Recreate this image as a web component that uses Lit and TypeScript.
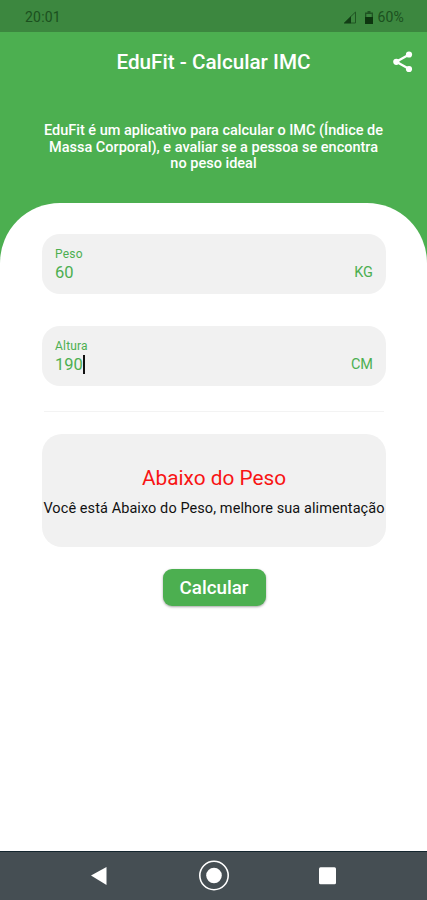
import { LitElement, html, css } from "lit";
import { customElement, property } from "lit/decorators.js";

@customElement("measure-field")
class MeasureField extends LitElement {
  @property() label = "";
  @property() value = "";
  @property() unit = "";
  @property({ type: Boolean }) active = false;

  static styles = css`
    :host {
      display: flex;
      justify-content: space-between;
      align-items: flex-end;
      box-sizing: border-box;
      height: 60px;
      padding: 0 13px 11px;
      border-radius: 18px;
      background: #f1f1f1;
      color: #4caf50;
    }
    .label { font-size: 12px; line-height: 16px; letter-spacing: 0.2px; }
    .row { display: flex; align-items: center; height: 21px; }
    .value { font-size: 16.5px; line-height: 21px; }
    .caret { width: 2px; height: 19px; background: #111; }
    .unit { font-size: 14.5px; line-height: 21px; }
  `;

  render() {
    return html`
      <div>
        <div class="label">${this.label}</div>
        <div class="row">
          <span class="value">${this.value}</span>
          ${this.active ? html`<span class="caret"></span>` : ""}
        </div>
      </div>
      <span class="unit">${this.unit}</span>
    `;
  }
}

@customElement("app-root")
class AppRoot extends LitElement {
  static styles = css`
    :host {
      display: flex;
      flex-direction: column;
      height: 900px;
      overflow: hidden;
      background: #4caf50;
      font-family: Roboto, sans-serif;
    }
    svg { display: block; }
    .status {
      display: flex;
      align-items: center;
      box-sizing: border-box;
      height: 32px;
      padding: 2px 23px 0 25px;
      background: #3c873f;
      color: #1b501e;
      font-size: 14px;
      letter-spacing: 0.2px;
    }
    .status .clock { flex: 1; }
    .status .signal { margin-right: 8px; }
    .status .battery { margin-right: 4px; }
    .bar {
      display: grid;
      grid-template-columns: 48px 1fr 48px;
      align-items: center;
      height: 60px;
      color: #fff;
    }
    .title {
      grid-column: 2;
      text-align: center;
      font-size: 20.7px;
      font-weight: 500;
      white-space: nowrap;
    }
    .intro {
      height: 79.5px;
      margin-top: 31px;
      color: #fff;
      font-size: 14.5px;
      font-weight: 500;
      line-height: 16.5px;
      text-align: center;
      white-space: nowrap;
    }
    .sheet {
      flex: 1;
      display: flex;
      flex-direction: column;
      box-sizing: border-box;
      padding: 31.5px 41px 0 42px;
      border-radius: 60px 60px 0 0;
      background: #fff;
    }
    .fields { display: grid; gap: 32px; }
    .divider { height: 1px; margin: 25px 2px 22px; background: #f3f3f3; }
    .result {
      display: flex;
      flex-direction: column;
      align-items: center;
      box-sizing: border-box;
      height: 113px;
      padding-top: 32px;
      border-radius: 20px;
      background: #f1f1f1;
      white-space: nowrap;
    }
    .verdict { color: #f81414; font-size: 20.8px; line-height: 24px; }
    .advice { margin-top: 10px; color: #111; font-size: 14.5px; line-height: 18px; letter-spacing: 0.08px; }
    .action {
      align-self: center;
      box-sizing: border-box;
      width: 103px;
      height: 37px;
      margin-top: 22px;
      padding: 1px 0 0;
      border: 0;
      border-radius: 9px;
      background: #4caf50;
      box-shadow: 0 1px 2.5px rgba(0, 0, 0, 0.36);
      color: #fff;
      font: 500 18.800px/36px Roboto, sans-serif;
    }
    .nav {
      display: flex;
      height: 49px;
      box-sizing: border-box;
      border-top: 1px solid #14262f;
      background: #454e53;
    }
  `;

  render() {
    return html`
      <div class="status">
        <span class="clock">20:01</span>
        <svg class="signal" width="14" height="13" viewBox="0 0 14 13">
          <path d="M12.5 1v11H1.2z" fill="none" stroke="#1f5422" stroke-width="1" />
          <path d="M1 12.3L8 5.2v7.1z" fill="#123d15" />
        </svg>
        <svg class="battery" width="8" height="13" viewBox="0 0 8 13">
          <path d="M2.5 0h3v1.5H8V13H0V1.5h2.5z" fill="#1f5422" />
          <path d="M1.300 3h5.400v3H1.300z" fill="#3c873f" />
          <path d="M0 6h8v7H0z" fill="#0d350f" />
        </svg>
        <span>60%</span>
      </div>
      <header class="bar">
        <span class="title">EduFit - Calcular IMC</span>
        <svg width="48" height="48" viewBox="0 0 48 48">
          <path d="M30.200 16.500L17.300 23.800l12.900 7.200" fill="none" stroke="#fff" stroke-width="2.300" />
          <circle cx="30" cy="16.500" r="3.100" fill="#fff" />
          <circle cx="17.300" cy="23.800" r="3.100" fill="#fff" />
          <circle cx="30" cy="31" r="3.100" fill="#fff" />
        </svg>
      </header>
      <div class="intro">
        EduFit é um aplicativo para calcular o IMC (Índice de<br />Massa Corporal), e
        avaliar se a pessoa se encontra<br />no peso ideal
      </div>
      <main class="sheet">
        <div class="fields">
          <measure-field label="Peso" value="60" unit="KG"></measure-field>
          <measure-field label="Altura" value="190" unit="CM" active></measure-field>
        </div>
        <div class="divider"></div>
        <section class="result">
          <span class="verdict">Abaixo do Peso</span>
          <span class="advice">Você está Abaixo do Peso, melhore sua alimentação</span>
        </section>
        <button class="action">Calcular</button>
      </main>
      <nav class="nav">
        <svg width="427" height="48" viewBox="0 0 427 48">
          <path d="M91 23.500L106.500 15v18z" fill="#fff" />
          <circle cx="214" cy="23.500" r="14.200" fill="none" stroke="#fff" stroke-width="1.600" />
          <circle cx="214" cy="23.500" r="7.800" fill="#fff" />
          <rect x="319" y="15.300" width="17" height="17" rx="1.500" fill="#fff" />
        </svg>
      </nav>
    `;
  }
}
